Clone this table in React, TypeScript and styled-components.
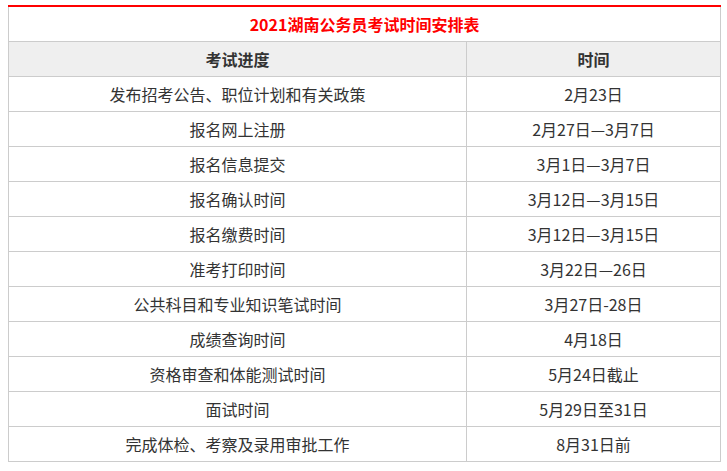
import React from "react";
import styled, { createGlobalStyle } from "styled-components";

const GlobalStyle = createGlobalStyle`
  html, body {
    margin: 0;
    padding: 0;
    background: #fff;
  }
  body {
    padding: 5px 8px;
    font-family: "Microsoft YaHei", "Noto Sans CJK SC", "Noto Sans", sans-serif;
  }
`;

const rows: [string, string][] = [
  ["发布招考公告、职位计划和有关政策", "2月23日"],
  ["报名网上注册", "2月27日—3月7日"],
  ["报名信息提交", "3月1日—3月7日"],
  ["报名确认时间", "3月12日—3月15日"],
  ["报名缴费时间", "3月12日—3月15日"],
  ["准考打印时间", "3月22日—26日"],
  ["公共科目和专业知识笔试时间", "3月27日-28日"],
  ["成绩查询时间", "4月18日"],
  ["资格审查和体能测试时间", "5月24日截止"],
  ["面试时间", "5月29日至31日"],
  ["完成体检、考察及录用审批工作", "8月31日前"],
];

const App: React.FC = () => {
  return (
    <>
      <GlobalStyle />
      <Table>
        <colgroup>
          <col style={{ width: 458 }} />
          <col style={{ width: 254 }} />
        </colgroup>
        <tbody>
          <tr>
            <TitleCell colSpan={2}>2021湖南公务员考试时间安排表</TitleCell>
          </tr>
          <tr>
            <Cell head>考试进度</Cell>
            <Cell head>时间</Cell>
          </tr>
          {rows.map(([stage, time], index) => (
            <tr key={index}>
              <Cell>{stage}</Cell>
              <Cell>{time}</Cell>
            </tr>
          ))}
        </tbody>
      </Table>
    </>
  );
};
export default App;

const Table = styled.table`
  width: 712px;
  table-layout: fixed;
  border-collapse: collapse;
  border-top: 2px solid #ff0000;
`;

const TitleCell = styled.td`
  height: 34px;
  padding: 0;
  border: 1px solid #cccccc;
  border-top: 2px solid #ff0000;
  text-align: center;
  vertical-align: middle;
  color: #ff0000;
  font-size: 16px;
  font-weight: bold;
  line-height: 20px;
`;

interface CellProps {
  head?: boolean;
}
const Cell = styled.td<CellProps>`
  height: 34px;
  padding: 0;
  border: 1px solid #cccccc;
  text-align: center;
  vertical-align: middle;
  background-color: ${(p) => (p.head ? "#efefef" : "#ffffff")};
  color: #333333;
  font-size: 16px;
  font-weight: ${(p) => (p.head ? "bold" : "normal")};
  line-height: 20px;
`;
